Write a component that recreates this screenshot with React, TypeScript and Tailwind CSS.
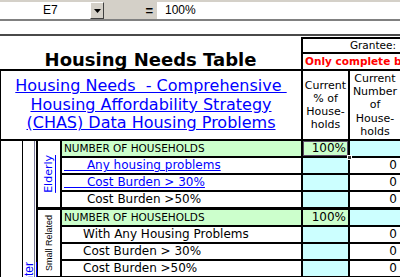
const cyan = "bg-[#ccffff]";
const green = "bg-[#ccffcc]";

type Row = {
  label: string;
  link?: boolean;
  caps?: boolean;
  pct?: string;
  num?: string;
  selected?: boolean;
};

const elderly: Row[] = [
  { label: "NUMBER OF HOUSEHOLDS", caps: true, pct: "100%", selected: true },
  { label: "      Any housing problems", link: true, num: "0" },
  { label: "      Cost Burden > 30%", link: true, num: "0" },
  { label: "      Cost Burden >50%", num: "0" },
];

const smallRelated: Row[] = [
  { label: "NUMBER OF HOUSEHOLDS", caps: true, pct: "100%" },
  { label: "     With Any Housing Problems", num: "0" },
  { label: "     Cost Burden > 30%", num: "0" },
  { label: "     Cost Burden >50%", num: "0" },
];

function FormulaBar() {
  return (
    <div className="flex h-[21px] border-b-2 border-[#808080] bg-[#d4d0c8] pt-[2px] font-['Liberation_Sans',Arial,sans-serif] text-[12px] leading-[17px]">
      <div className="h-[17px] w-[90px] shrink-0 bg-white pl-[43px]">E7</div>
      <div className="flex h-[17px] w-[14px] shrink-0 items-center justify-center border border-white border-r-[#404040] border-b-[#404040] bg-[#d4d0c8]">
        <svg width="7" height="4" viewBox="0 0 7 4">
          <path d="M0 0h7L3.5 4z" fill="#000" />
        </svg>
      </div>
      <div className="w-[53px] shrink-0 pr-[4px] text-right text-[13px] font-bold">=</div>
      <div className="h-[17px] flex-1 bg-white pl-[8px]">100%</div>
    </div>
  );
}

function DataRow({ row, last }: { row: Row; last: boolean }) {
  return (
    <div className={last ? "flex h-[15px]" : "flex h-[17px] border-b-2 border-black"}>
      <div
        className={`w-[239px] shrink-0 overflow-hidden whitespace-pre pl-[2px] ${
          row.caps ? `${green} text-[10.5px] leading-[15px]` : "text-[12px] leading-[15px]"
        } ${row.link ? "text-[#0000ff] underline" : ""}`}
      >
        {row.label}
      </div>
      <div
        className={`relative w-[47px] shrink-0 border-l-2 border-black pr-[2px] text-right text-[12px] leading-[15px] ${
          row.caps ? green : cyan
        } ${row.selected ? "shadow-[inset_0_0_0_1px_#5b4d66]" : ""}`}
      >
        {row.pct}
        {row.selected && (
          <div className="absolute right-[-4px] bottom-[-4px] z-10 h-[5px] w-[5px] border border-white bg-[#333]" />
        )}
      </div>
      <div
        className={`w-[52px] shrink-0 border-l-2 border-black pr-[3px] text-right text-[12px] leading-[15px] ${
          row.caps ? cyan : "bg-white"
        }`}
      >
        {row.num}
      </div>
    </div>
  );
}

function Group({ label, rows }: { label: React.ReactNode; rows: Row[] }) {
  return (
    <div className="flex border-b-[3px] border-black">
      <div className="flex w-[26px] shrink-0 items-center justify-center border-x-2 border-black">{label}</div>
      <div className="flex flex-1 flex-col">
        {rows.map((r, i) => (
          <DataRow key={i} row={r} last={i === rows.length - 1} />
        ))}
      </div>
    </div>
  );
}

export default function App() {
  return (
    <div className="h-[277px] w-[400px] overflow-hidden bg-white font-['DejaVu_Sans',Verdana,sans-serif] text-black">
      <FormulaBar />
      <div className="h-[13px]" />
      <div className="h-[2px] bg-[#4a4a4a]" />
      <div className="h-[1px]" />

      {/* title */}
      <div className="flex h-[34px] border-b-2 border-black">
        <div className="flex w-[301px] shrink-0 items-end justify-center whitespace-nowrap text-[18px] font-bold leading-[18px]">
          Housing Needs Table
        </div>
        <div className="flex min-w-0 flex-1 flex-col border-l-2 border-black">
          <div className="h-[17px] border-y-2 border-black pr-[4px] text-right text-[10.5px] leading-[13px]">
            Grantee:
          </div>
          <div className="overflow-hidden whitespace-nowrap pl-[2px] text-[10.5px] font-bold leading-[15px] text-[#ff0000]">
            Only complete blue sections
          </div>
        </div>
      </div>

      {/* link + column headings */}
      <div className="flex h-[70px] border-b-2 border-black">
        <div className="flex w-[301px] shrink-0 items-center justify-center border-l border-black text-center text-[16px] leading-[18.5px] text-[#0000ff]">
          <span className="whitespace-pre underline">
            {"Housing Needs  - Comprehensive "}
            <br />
            {"Housing Affordability Strategy"}
            <br />
            {"(CHAS) Data Housing Problems"}
          </span>
        </div>
        <div className="flex w-[47px] shrink-0 items-center justify-center border-l-2 border-black text-center text-[11px] leading-[13px]">
          Current
          <br />% of
          <br />
          House-
          <br />
          holds
        </div>
        <div className="flex min-w-0 flex-1 items-center justify-center border-l-2 border-black text-center text-[11px] leading-[13.3px]">
          Current
          <br />
          Number
          <br />
          of
          <br />
          House-
          <br />
          holds
        </div>
      </div>

      {/* body */}
      <div className="flex">
        <div className="w-[23px] shrink-0 border-x border-black" />
        <div className="flex w-[12px] shrink-0 justify-center border-r border-[#7a7a9a] pt-[121px]">
          <span className="rotate-180 font-['Liberation_Sans',Arial,sans-serif] text-[12px] leading-[12px] text-[#0000ff] underline [writing-mode:vertical-rl]">
            Renter
          </span>
        </div>
        <div className="w-[1px] shrink-0" />
        <div className="flex min-w-0 flex-1 flex-col">
          <Group
            rows={elderly}
            label={
              <span className="rotate-180 text-[11px] leading-[12px] text-[#0000ff] underline [writing-mode:vertical-rl]">
                Elderly
              </span>
            }
          />
          <Group
            rows={smallRelated}
            label={
              <span className="rotate-180 font-['Liberation_Sans',Arial,sans-serif] text-[9px] leading-[10px] [writing-mode:vertical-rl]">
                Small Related
              </span>
            }
          />
        </div>
      </div>
    </div>
  );
}
